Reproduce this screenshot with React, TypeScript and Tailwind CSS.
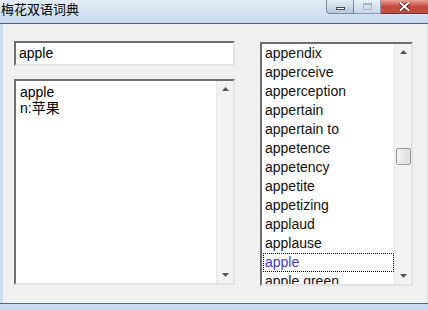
const words = [
  "appendix",
  "apperceive",
  "apperception",
  "appertain",
  "appertain to",
  "appetence",
  "appetency",
  "appetite",
  "appetizing",
  "applaud",
  "applause",
  "apple",
  "apple green",
];

const font = { fontFamily: '"Liberation Sans", Arial, sans-serif' };

const ScrollBar = ({ thumb }: { thumb?: boolean }) => (
  <div className="w-[17px] h-full bg-[#f3f3f3] border-l border-[#e8e8e8] flex flex-col items-center py-[6px]">
    <svg width="7" height="4" viewBox="0 0 7 4">
      <path d="M0 4 L3.5 0 L7 4 Z" fill="#555" />
    </svg>
    {thumb && (
      <div className="w-[15px] h-[17px] mt-[94px] rounded-[2px] border border-[#9a9a9a] bg-gradient-to-r from-[#f4f4f4] to-[#dcdcdc]" />
    )}
    <svg className="mt-auto" width="7" height="4" viewBox="0 0 7 4">
      <path d="M0 0 L7 0 L3.5 4 Z" fill="#555" />
    </svg>
  </div>
);

export default function App() {
  return (
    <div className="w-[428px] h-[310px] flex flex-col overflow-hidden bg-[#f0f0f0]" style={font}>
      {/* title bar */}
      <div className="h-[24px] flex items-start border-b border-[#55667a] bg-gradient-to-b from-[#e2ecf7] to-[#c6daef]">
        <span
          className="pl-[1px] pt-[1px] text-[13px] leading-[16px] text-black"
          style={{ fontFamily: '"Noto Sans CJK SC", sans-serif' }}
        >
          梅花双语词典
        </span>
        <div className="ml-auto flex h-[14px]">
          <div className="w-[28px] h-full rounded-bl-[4px] border border-t-0 border-[#7a8ba0] bg-gradient-to-b from-[#e3ecf6] to-[#b6c9de] flex items-center justify-center">
            <div className="w-[9px] h-[3px] mt-[3px] bg-white border border-[#3b4a5c]" />
          </div>
          <div className="w-[27px] h-full border-b border-r border-[#8a9aae] bg-gradient-to-b from-[#e8eff7] to-[#c6d6e8] flex items-center justify-center">
            <div className="w-[9px] h-[7px] border border-[#a9b6c6] border-t-2" />
          </div>
          <div className="w-[47px] h-full border-b border-[#8d2a22] bg-gradient-to-b from-[#e8a298] via-[#c8493d] to-[#c74d40] flex items-center justify-center">
            <svg width="11" height="9" viewBox="0 0 11 9">
              <path d="M1 0.5 L10 8.5 M10 0.5 L1 8.5" stroke="#3a1a16" strokeWidth="3.4" />
              <path d="M1 0.5 L10 8.5 M10 0.5 L1 8.5" stroke="#fff" strokeWidth="2" />
            </svg>
          </div>
        </div>
      </div>

      {/* body */}
      <div className="flex-1 flex">
        <div className="w-[3px] bg-[#c8dbef]" />
        <div className="flex-1 flex pl-[11px] pt-[17px] gap-[25px]">
          <div className="w-[221px] flex flex-col gap-[13px]">
            <div className="h-[25px] border-2 border-t-[#6e6e6e] border-l-[#6e6e6e] border-r-[#e3e3e3] border-b-[#e3e3e3] bg-white flex items-center pl-[3px] text-[14px] text-black">
              apple
            </div>
            <div className="h-[206px] flex border-2 border-t-[#6e6e6e] border-l-[#6e6e6e] border-r-[#e3e3e3] border-b-[#e3e3e3] bg-white">
              <div
                className="flex-1 pl-[4px] pt-[3px] text-[14px] leading-[16px] text-black"
                style={{ fontFamily: '"Liberation Sans", "Noto Sans CJK SC", sans-serif' }}
              >
                <div>apple</div>
                <div>n:苹果</div>
              </div>
              <ScrollBar />
            </div>
          </div>

          <div className="w-[153px] h-[244px] mt-[1px] flex border-2 border-t-[#6e6e6e] border-l-[#6e6e6e] border-r-[#e3e3e3] border-b-[#e3e3e3] bg-white">
            <div className="flex-1 overflow-hidden pl-[1px] text-[14px] leading-[19px] text-[#111]">
              {words.map((w) =>
                w === "apple" ? (
                  <div key={w} className="h-[19px] pl-[1px] border border-dotted border-black text-[#3b3bd6] leading-[17px]">
                    {w}
                  </div>
                ) : (
                  <div key={w} className="h-[19px] pl-[2px]">
                    {w}
                  </div>
                )
              )}
            </div>
            <ScrollBar thumb />
          </div>
        </div>
        <div className="w-[2px] bg-[#e6ebf0]" />
      </div>

      {/* bottom frame */}
      <div className="h-[7px] border-t border-[#55667a] bg-[#c8dbef]" />
    </div>
  );
}
